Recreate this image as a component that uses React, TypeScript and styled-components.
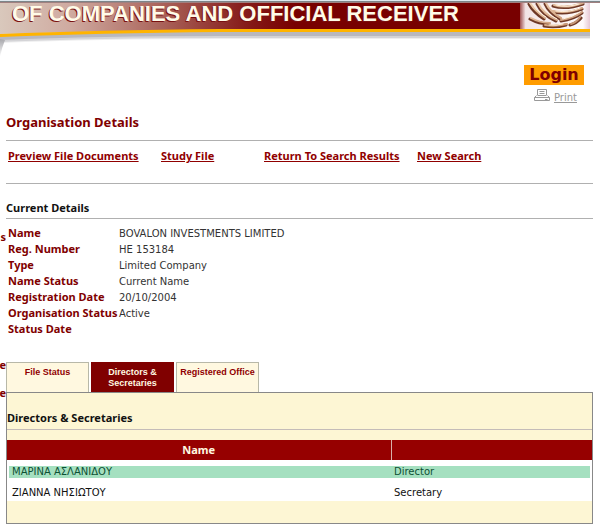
import React from 'react';
import styled, { createGlobalStyle } from 'styled-components';

const GlobalStyle = createGlobalStyle`
  * { box-sizing: border-box; }
  body {
    margin: 0;
    background: #fff;
    color: #111;
    font-family: 'DejaVu Sans', Verdana, sans-serif;
    font-size: 10px;
    line-height: 16px;
  }
`;

const boldFace = "'Noto Sans', Verdana, sans-serif";

const Page = styled.div`
  overflow: hidden;
`;

const TopRule = styled.div`
  height: 3px;
  background: linear-gradient(#dfe9ef 0 1px, #7d8588 1px 2px, #a08080 2px);
`;

const Banner = styled.header`
  position: relative;
  height: 42px;
  margin-right: 10px;
`;

const BannerArt = styled.svg`
  position: absolute;
  inset: 0;
  display: block;
  width: 100%;
  height: 56px;
`;

const Emblem = styled.svg`
  position: absolute;
  top: 0;
  right: 0;
  width: 70px;
  height: 26px;
`;

const BannerTitle = styled.div`
  position: relative;
  padding-left: 12px;
  color: #fffbe8;
  font: bold 22px/22px 'Liberation Sans', Arial, sans-serif;
  text-shadow: -1px 1px 0 #7a1010;
  white-space: nowrap;
`;

const Body = styled.div`
  display: grid;
  grid-template-columns: 6px minmax(0, 1fr);
`;

const SideMenu = styled.nav`
  display: flex;
  flex-direction: column;
  align-items: flex-end;
  padding-top: 184px;
  overflow: hidden;
`;

const SideLink = styled.a<{ $after: number }>`
  margin-bottom: ${({ $after }) => $after}px;
  color: #800000;
  font: bold 11px/16px ${boldFace};
  text-decoration: none;
`;

const Main = styled.main`
  padding-right: 7px;
`;

const Account = styled.div`
  display: flex;
  flex-direction: column;
  align-items: flex-end;
  padding: 20px 9px 0 0;
`;

const LoginButton = styled.button`
  width: 60px;
  height: 20px;
  padding: 0;
  border: 0;
  background: #ff9c00;
  color: #800000;
  font: bold 16px/20px 'DejaVu Sans', Verdana, sans-serif;
`;

const PrintLink = styled.a`
  display: flex;
  align-items: flex-start;
  gap: 4px;
  margin: 4px 7px 0 0;
  color: #999;
  line-height: 18px;
`;

const PageTitle = styled.h1`
  margin: 7px 0 0;
  padding-bottom: 10px;
  border-bottom: 1px solid #b0b0b0;
  color: #800000;
  font: bold 13px/16px ${boldFace};
`;

const Actions = styled.nav`
  display: grid;
  grid-template-columns: 153px 103px 153px 1fr;
  padding: 7px 2px 19px;
  border-bottom: 1px solid #b0b0b0;
  white-space: nowrap;
`;

const Action = styled.a`
  color: #900000;
  font: bold 11px/16px ${boldFace};
`;

const Heading = styled.h2`
  margin: 0;
  padding: 16px 0 2px;
  border-bottom: 1px solid #b0b0b0;
  font: bold 11px/16px ${boldFace};
`;

const PanelHeading = styled(Heading)`
  padding: 17px 0 3px;
  border-bottom-color: #c4bcb8;
`;

const Details = styled.dl`
  display: grid;
  grid-template-columns: 111px 1fr;
  grid-auto-rows: 16px;
  margin: 7px 0 24px;
  padding-left: 2px;
  white-space: nowrap;
`;

const Term = styled.dt`
  color: #800000;
  font: bold 11px/14px ${boldFace};
`;

const Value = styled.dd`
  margin: 0;
  color: #333;
`;

const Tabs = styled.div`
  display: flex;
  gap: 2px;
`;

const Tab = styled.button<{ $active?: boolean }>`
  display: flex;
  justify-content: center;
  width: 83px;
  height: 30px;
  padding: 4px 0 0;
  border: 1px solid ${({ $active }) => ($active ? '#800000' : '#b8b8a8')};
  border-bottom: 0;
  background: ${({ $active }) => ($active ? '#800000' : '#fff8e0')};
  color: ${({ $active }) => ($active ? '#fff8e0' : '#900000')};
  font: bold 9px/11px 'Liberation Sans', Arial, sans-serif;
  white-space: nowrap;
`;

const Panel = styled.section`
  padding-bottom: 22px;
  border: 1px solid #888;
  background: #fdf6d4;
`;

const People = styled.table`
  width: 100%;
  margin-top: 10px;
  border-collapse: collapse;
  table-layout: fixed;

  th {
    height: 20px;
    padding: 0;
    background: #960000;
    color: #fff8e0;
    font: bold 11px/16px ${boldFace};
  }
  th:first-child {
    width: 384px;
  }
  th + th {
    border-left: 1px solid #d8b0a8;
  }
`;

const Cell = styled.td<{ $marked?: boolean }>`
  height: ${({ $marked }) => ($marked ? 21 : 20)}px;
  padding: ${({ $marked }) => ($marked ? '5px 0 3px' : '3px 0 0')};
  background: #fff;
  color: ${({ $marked }) => ($marked ? '#0d5034' : '#111')};

  &:first-child {
    padding-left: 2px;
  }
  &:last-child {
    padding-right: 2px;
  }
`;

const CellText = styled.div<{ $marked?: boolean }>`
  padding-left: 3px;
  background: ${({ $marked }) => ($marked ? '#a5e0c0' : 'transparent')};
  line-height: 12px;
`;

const details = [
  ['Name', 'BOVALON INVESTMENTS LIMITED'],
  ['Reg. Number', 'HE 153184'],
  ['Type', 'Limited Company'],
  ['Name Status', 'Current Name'],
  ['Registration Date', '20/10/2004'],
  ['Organisation Status', 'Active'],
  ['Status Date', ''],
];

const people = [
  { name: 'ΜΑΡΙΝΑ ΑΣΛΑΝΙΔΟΥ', role: 'Director', marked: true },
  { name: 'ΖΙΑΝΝΑ ΝΗΣΙΩΤΟΥ', role: 'Secretary', marked: false },
];

const sideLinks = [
  { label: 's', after: 112 },
  { label: 'e', after: 12 },
  { label: 'e', after: 0 },
];

function BannerBackground() {
  return (
    <BannerArt viewBox="0 0 590 56" preserveAspectRatio="none" aria-hidden="true">
      <defs>
        <linearGradient id="wine" x1="0" x2="1" y1="0" y2="0">
          <stop offset="0" stopColor="#d9c8bc" />
          <stop offset="0.12" stopColor="#cfaaa0" />
          <stop offset="0.27" stopColor="#ab655c" />
          <stop offset="0.42" stopColor="#851a18" />
          <stop offset="0.5" stopColor="#780000" />
          <stop offset="1" stopColor="#780000" />
        </linearGradient>
        <linearGradient id="edge" x1="0" x2="0" y1="0" y2="1">
          <stop offset="0" stopColor="#a8a8ac" />
          <stop offset="1" stopColor="#ffffff" />
        </linearGradient>
      </defs>
      <path d="M0 31Q100 28 220 28H590V36H220Q100 36 0 40Z" fill="#eeeeef" />
      <path d="M0 31Q100 28 220 28H590V35H220Q100 35 0 39Z" fill="#d4d4d7" />
      <path d="M0 31Q100 28 220 28H590V33H220Q100 33 0 37Z" fill="#b8b8bf" />
      <path d="M0 36L5 37Q2 44 0 54Z" fill="url(#edge)" />
      <path d="M0 0H590V27H220Q100 28 0 31Z" fill="url(#wine)" />
      <path d="M0 31Q100 27 220 26H590V29H220Q100 30 0 34Z" fill="#ffb400" />
    </BannerArt>
  );
}

function HandsEmblem() {
  return (
    <Emblem viewBox="0 0 70 26" aria-hidden="true">
      <defs>
        <linearGradient id="fade" x1="0" x2="1" y1="0" y2="0">
          <stop offset="0" stopColor="#a05050" />
          <stop offset="0.08" stopColor="#f2e4e6" />
          <stop offset="0.9" stopColor="#fffafa" />
          <stop offset="1" stopColor="#e6c8d4" />
        </linearGradient>
        <linearGradient id="skin" x1="0" x2="1" y1="0" y2="1">
          <stop offset="0" stopColor="#f0cfae" />
          <stop offset="1" stopColor="#c08c6c" />
        </linearGradient>
      </defs>
      <path d="M0 0H70V26H0Z" fill="url(#fade)" />
      <g fill="none" strokeLinecap="round">
        <g stroke="#6e3826" strokeWidth="3">
          <path d="M9 1Q13 9 24 16M17 1Q22 12 36 18M25 1Q29 10 40 16M10 16Q19 21 29 21M24 23Q35 25 46 22M33 3Q46 7 63 1M32 9Q47 12 62 6M41 18Q54 16 62 10M50 22Q57 20 61 15" />
        </g>
        <g stroke="url(#skin)" strokeWidth="2">
          <path d="M10 0Q15 8 25 15M18 0Q23 11 37 17M26 0Q30 9 41 15M11 15Q20 20 30 20M25 22Q35 24 47 21M34 2Q46 6 63 0M33 8Q47 11 62 5M41 17Q54 15 62 9M51 21Q57 19 60 14" />
        </g>
        <g stroke="#fff1df" strokeWidth="1">
          <path d="M13 1Q17 9 26 14M22 2Q26 11 37 16M36 2Q47 5 59 1M36 8Q49 10 60 5M43 16Q53 14 60 9M29 22Q36 23 43 21" />
        </g>
      </g>
    </Emblem>
  );
}

function PrinterIcon() {
  return (
    <svg width="16" height="12" viewBox="0 0 16 12" fill="none" stroke="#999" aria-hidden="true">
      <path d="M3.5 6V.5H12.5V6M5.5 2.5H10.5M5.5 4.5H10.5M3.5 6.5H12.5M2.5 6.5L.5 8.5V11.5H15.5V8.5L13.5 6.5M.5 8.5H15.5M11 10.5H13.5" />
    </svg>
  );
}

export default function App() {
  return (
    <Page>
      <GlobalStyle />
      <TopRule />
      <Banner>
        <BannerBackground />
        <HandsEmblem />
        <BannerTitle>OF COMPANIES AND OFFICIAL RECEIVER</BannerTitle>
      </Banner>
      <Body>
        <SideMenu>
          {sideLinks.map((link, i) => (
            <SideLink key={i} href="#" $after={link.after}>{link.label}</SideLink>
          ))}
        </SideMenu>
        <Main>
          <Account>
            <LoginButton type="button">Login</LoginButton>
            <PrintLink href="#"><PrinterIcon />Print</PrintLink>
          </Account>
          <PageTitle>Organisation Details</PageTitle>
          <Actions>
            <Action href="#">Preview File Documents</Action>
            <Action href="#">Study File</Action>
            <Action href="#">Return To Search Results</Action>
            <Action href="#">New Search</Action>
          </Actions>
          <Heading>Current Details</Heading>
          <Details>
            {details.map(([term, value]) => (
              <React.Fragment key={term}>
                <Term>{term}</Term>
                <Value>{value}</Value>
              </React.Fragment>
            ))}
          </Details>
          <Tabs role="tablist">
            <Tab type="button" role="tab" aria-selected={false}>File Status</Tab>
            <Tab type="button" role="tab" aria-selected $active>Directors &amp;<br />Secretaries</Tab>
            <Tab type="button" role="tab" aria-selected={false}>Registered Office</Tab>
          </Tabs>
          <Panel role="tabpanel">
            <PanelHeading>Directors &amp; Secretaries</PanelHeading>
            <People>
              <thead>
                <tr>
                  <th scope="col">Name</th>
                  <th aria-label="Position" />
                </tr>
              </thead>
              <tbody>
                {people.map(({ name, role, marked }) => (
                  <tr key={name}>
                    <Cell $marked={marked}><CellText $marked={marked}>{name}</CellText></Cell>
                    <Cell $marked={marked}><CellText $marked={marked}>{role}</CellText></Cell>
                  </tr>
                ))}
              </tbody>
            </People>
          </Panel>
        </Main>
      </Body>
    </Page>
  );
}
